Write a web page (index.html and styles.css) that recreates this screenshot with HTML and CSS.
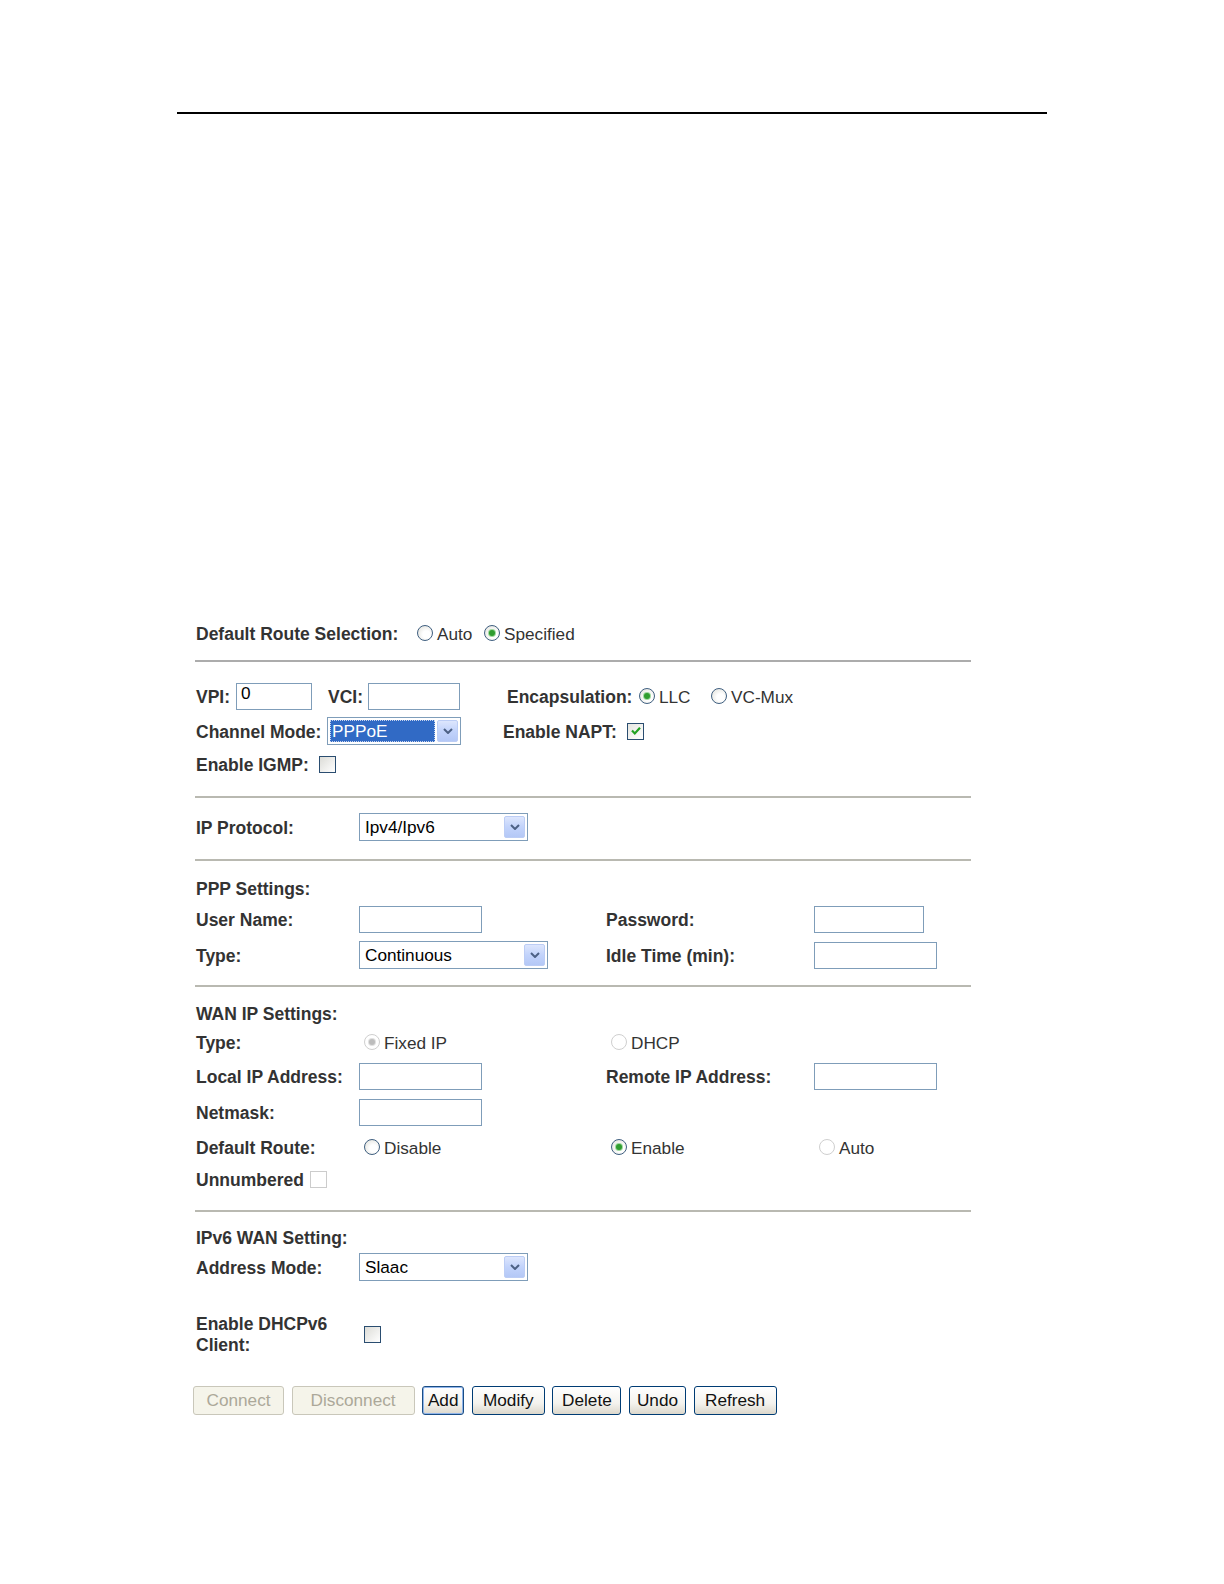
FILE: index.html
```html
<!DOCTYPE html>
<html>
<head>
<meta charset="utf-8">
<title>WAN Configuration</title>
<link rel="stylesheet" href="styles.css">
</head>
<body>
<div class="page">
  <div class="topline"></div>

  <form class="wan">
    <div class="row row-route">
      <span class="lbl lbl-route">Default Route Selection:</span>
      <span class="opt opt-auto"><span class="radio"></span>Auto</span>
      <span class="opt"><span class="radio checked"></span>Specified</span>
    </div>
    <div class="rule rule-route"></div>

    <div class="atm">
      <div class="arow arow-vpi">
        <div class="aleft">
          <span class="lbl lbl-vpi">VPI:</span>
          <input class="txt txt-vpi" type="text" value="0">
          <span class="lbl lbl-vci">VCI:</span>
          <input class="txt txt-vci" type="text">
        </div>
        <div class="aright encap">
          <span class="lbl lbl-encap">Encapsulation:</span>
          <span class="opt opt-llc"><span class="radio checked"></span>LLC</span>
          <span class="opt"><span class="radio"></span>VC-Mux</span>
        </div>
      </div>
      <div class="arow arow-channel">
        <div class="aleft">
          <span class="lbl lbl-channel">Channel Mode:</span>
          <div class="select sel-channel">
            <span class="sel-val hl">PPPoE</span>
            <span class="sel-btn"><svg viewBox="0 0 10 6" width="10" height="6"><path d="M1 1 L5 5 L9 1" fill="none" stroke="#4d6185" stroke-width="2"/></svg></span>
          </div>
        </div>
        <div class="aright">
          <span class="lbl lbl-napt">Enable NAPT:</span>
          <span class="check checked"><svg viewBox="0 0 14 14" width="14" height="14"><path d="M3 6.5 L5.8 9.5 L11 3.8" fill="none" stroke="#21a121" stroke-width="2.2"/></svg></span>
        </div>
      </div>
      <div class="arow arow-igmp">
        <div class="aleft">
          <span class="lbl lbl-igmp">Enable IGMP:</span>
          <span class="check"></span>
        </div>
      </div>
    </div>
    <div class="rule rule-atm"></div>

    <div class="frow frow-ip">
      <span class="lbl">IP Protocol:</span>
      <div class="select sel-ip">
        <span class="sel-val">Ipv4/Ipv6</span>
        <span class="sel-btn"><svg viewBox="0 0 10 6" width="10" height="6"><path d="M1 1 L5 5 L9 1" fill="none" stroke="#4d6185" stroke-width="2"/></svg></span>
      </div>
    </div>
    <div class="rule rule-ip"></div>

    <div class="frow frow-title">
      <span class="lbl">PPP Settings:</span>
    </div>
    <div class="frow frow-user">
      <span class="lbl">User Name:</span>
      <span class="cell"><input class="txt txt-mid" type="text"></span>
      <span class="lbl">Password:</span>
      <span class="cell"><input class="txt txt-pass" type="password"></span>
    </div>
    <div class="frow frow-type">
      <span class="lbl">Type:</span>
      <div class="select sel-type">
        <span class="sel-val">Continuous</span>
        <span class="sel-btn"><svg viewBox="0 0 10 6" width="10" height="6"><path d="M1 1 L5 5 L9 1" fill="none" stroke="#4d6185" stroke-width="2"/></svg></span>
      </div>
      <span class="lbl">Idle Time (min):</span>
      <span class="cell"><input class="txt txt-mid" type="text"></span>
    </div>
    <div class="rule rule-ppp"></div>

    <div class="frow frow-wantitle">
      <span class="lbl">WAN IP Settings:</span>
    </div>
    <div class="frow frow-wantype">
      <span class="lbl">Type:</span>
      <span class="opt opt-cell"><span class="radio disabled checked"></span>Fixed IP</span>
      <span class="opt opt-cell"><span class="radio disabled"></span>DHCP</span>
    </div>
    <div class="frow frow-local">
      <span class="lbl">Local IP Address:</span>
      <span class="cell"><input class="txt txt-mid" type="text"></span>
      <span class="lbl">Remote IP Address:</span>
      <span class="cell"><input class="txt txt-mid" type="text"></span>
    </div>
    <div class="frow frow-netmask">
      <span class="lbl">Netmask:</span>
      <span class="cell"><input class="txt txt-mid" type="text"></span>
    </div>
    <div class="frow frow-defroute">
      <span class="lbl">Default Route:</span>
      <span class="opt opt-cell"><span class="radio"></span>Disable</span>
      <span class="opt opt-cell"><span class="radio checked"></span>Enable</span>
      <span class="opt opt-cell"><span class="radio disabled"></span>Auto</span>
    </div>
    <div class="frow frow-unnum">
      <span class="lbl lbl-unnum">Unnumbered <span class="check disabled chk-unnum"></span></span>
    </div>
    <div class="rule rule-wan"></div>

    <div class="frow frow-v6title">
      <span class="lbl">IPv6 WAN Setting:</span>
    </div>
    <div class="frow frow-addr">
      <span class="lbl">Address Mode:</span>
      <div class="select sel-ip">
        <span class="sel-val">Slaac</span>
        <span class="sel-btn"><svg viewBox="0 0 10 6" width="10" height="6"><path d="M1 1 L5 5 L9 1" fill="none" stroke="#4d6185" stroke-width="2"/></svg></span>
      </div>
    </div>
    <div class="frow frow-dhcp6">
      <span class="lbl lbl-two">Enable DHCPv6<br>Client:</span>
      <span class="cell cell-check"><span class="check"></span></span>
    </div>

    <div class="buttons">
      <button type="button" class="btn disabled b-connect">Connect</button>
      <button type="button" class="btn disabled b-disconnect">Disconnect</button>
      <button type="button" class="btn default b-add">Add</button>
      <button type="button" class="btn b-modify">Modify</button>
      <button type="button" class="btn b-delete">Delete</button>
      <button type="button" class="btn b-undo">Undo</button>
      <button type="button" class="btn b-refresh">Refresh</button>
    </div>
  </form>
</div>
</body>
</html>
```
FILE: styles.css
```css
html, body {
  margin: 0;
  padding: 0;
  background: #ffffff;
}

body {
  font-family: "Liberation Sans", Arial, sans-serif;
  font-size: 17.2px;
  color: #333333;
}

.page {
  padding-top: 112px;
  padding-bottom: 100px;
}

.topline {
  margin-left: 177px;
  width: 870px;
  height: 2px;
  background: #000000;
}

.wan {
  margin: 504px 0 0 196px;
  width: 775px;
}

.lbl {
  font-weight: bold;
  font-size: 17.5px;
  white-space: nowrap;
  padding-top: 2px;
}

/* generic rows */
.row {
  display: flex;
  align-items: center;
  height: 30px;
}

.opt {
  display: inline-flex;
  align-items: center;
  white-space: nowrap;
  padding-top: 2px;
}

.opt .radio {
  margin-right: 4px;
  margin-top: -2px;
}

.lbl-route { width: 221px; }
.opt-auto { width: 67px; }

/* horizontal rules */
.rule {
  margin-left: -1px;
  width: 776px;
  height: 2px;
  background: #b9b9b1;
}
.rule-route { margin-top: 12px; background: #acacac; }
.rule-atm { margin-top: 18px; }
.rule-ip { margin-top: 18px; }
.rule-ppp { margin-top: 16px; }
.rule-wan { margin-top: 17px; }

/* ATM section */
.atm { margin-top: 20px; }

.arow {
  display: flex;
  height: 28px;
  align-items: center;
}
.arow-channel { margin-top: 7px; }
.arow-igmp { margin-top: 5px; }

.aleft {
  width: 307px;
  display: flex;
  align-items: center;
}
.aright {
  display: flex;
  align-items: center;
}
.encap { padding-left: 4px; }

.lbl-vpi { width: 40px; }
.txt-vpi { width: 76px; }
.lbl-vci { margin-left: 16px; width: 40px; }
.txt-vci { width: 92px; }

.lbl-encap { width: 132px; }
.opt-llc { width: 72px; }

.lbl-channel { width: 131px; }
.sel-channel { width: 134px; }
.lbl-napt { width: 124px; }
.lbl-igmp { width: 123px; }

/* four column rows */
.frow {
  display: grid;
  grid-template-columns: 163px 247px 208px 157px;
  align-items: center;
  height: 28px;
}
.frow-ip { margin-top: 15px; }
.frow-title { margin-top: 13px; }
.frow-user { margin-top: 3px; }
.frow-type { margin-top: 8px; }
.frow-wantitle { margin-top: 12px; }
.frow-wantype { margin-top: 1px; }
.frow-local { margin-top: 6px; }
.frow-netmask { margin-top: 8px; }
.frow-defroute { margin-top: 7px; }
.frow-unnum { margin-top: 4px; }
.frow-v6title { margin-top: 11px; }
.frow-addr { margin-top: 2px; }
.frow-dhcp6 {
  margin-top: 31px;
  height: 43px;
}

.cell {
  display: flex;
  align-items: center;
}
.opt-cell { padding-left: 5px; }
.cell-check { padding-left: 5px; }

.lbl-two {
  line-height: 21.2px;
}

.lbl-unnum {
  display: inline-flex;
  align-items: center;
}
.chk-unnum { margin-left: 6px; margin-top: -2px; }

/* text inputs */
.txt {
  box-sizing: border-box;
  height: 27px;
  margin: 0;
  border: 1px solid #7f9db9;
  background: #ffffff;
  font-family: "Liberation Sans", Arial, sans-serif;
  font-size: 17.2px;
  color: #000000;
  padding: 0 4px 6px;
  outline: none;
}
.txt-mid { width: 123px; }
.txt-pass { width: 110px; }

/* fake select */
.select {
  box-sizing: border-box;
  height: 28px;
  border: 1px solid #7f9db9;
  background: #ffffff;
  display: flex;
  padding: 2px;
  color: #000000;
}
.sel-ip { width: 169px; }
.sel-type { width: 189px; }

.sel-val {
  flex: 1;
  display: flex;
  align-items: center;
  padding-left: 3px;
  white-space: nowrap;
}
.sel-val.hl {
  background: #316ac5;
  color: #ffffff;
  padding-left: 2px;
  outline: 1px dotted #c8d4ee;
  outline-offset: -1px;
}

.sel-btn {
  width: 21px;
  margin-left: 2px;
  box-sizing: border-box;
  border: 1px solid #bccdf5;
  border-radius: 2px;
  background: linear-gradient(#dde6fd, #c2d3fb 50%, #b4c8f6);
  display: flex;
  align-items: center;
  justify-content: center;
}

/* radio buttons */
.radio {
  display: inline-block;
  box-sizing: border-box;
  width: 16px;
  height: 16px;
  border-radius: 50%;
  border: 1px solid #3f5f80;
  background: radial-gradient(circle at 60% 60%, #ffffff 30%, #dcdcd5 100%);
  position: relative;
  flex: none;
}
.radio.checked::after {
  content: "";
  position: absolute;
  left: 4px;
  top: 4px;
  width: 6px;
  height: 6px;
  border-radius: 50%;
  background: #2f9d2f;
  box-shadow: 0 0 0 1px #9fd89f;
}
.radio.disabled {
  border-color: #cfcfcf;
  background: #ffffff;
}
.radio.disabled.checked::after {
  background: #bdbdbd;
  box-shadow: 0 0 0 1px #e0e0e0;
}

/* checkboxes */
.check {
  display: inline-flex;
  align-items: center;
  justify-content: center;
  box-sizing: border-box;
  width: 17px;
  height: 17px;
  border: 1px solid #2a4d70;
  background: linear-gradient(135deg, #dcdcd7, #ffffff);
  flex: none;
}
.check.checked {
  background: linear-gradient(135deg, #e6e6e0, #ffffff);
}
.check.disabled {
  border-color: #cccccc;
  background: #ffffff;
}

/* buttons */
.buttons {
  margin-top: 31px;
  margin-left: -3px;
  display: flex;
  gap: 7.6px;
}

.btn {
  box-sizing: border-box;
  height: 29px;
  padding: 0;
  border: 1px solid #003c74;
  border-radius: 3px;
  background: linear-gradient(#ffffff, #f4f3ee 60%, #dcd8cc);
  font-family: "Liberation Sans", Arial, sans-serif;
  font-size: 17.2px;
  color: #111111;
  text-align: center;
}
.btn.disabled {
  border-color: #c9c7ba;
  background: #f5f4ea;
  color: #aca899;
}
.btn.default {
  box-shadow: inset 0 0 0 1px #8fb4ea;
  border-color: #1a4d84;
}

.b-connect { width: 91px; }
.b-disconnect { width: 123px; }
.b-add { width: 42px; }
.b-modify { width: 73px; }
.b-delete { width: 69px; }
.b-undo { width: 57px; }
.b-refresh { width: 83px; }
```
